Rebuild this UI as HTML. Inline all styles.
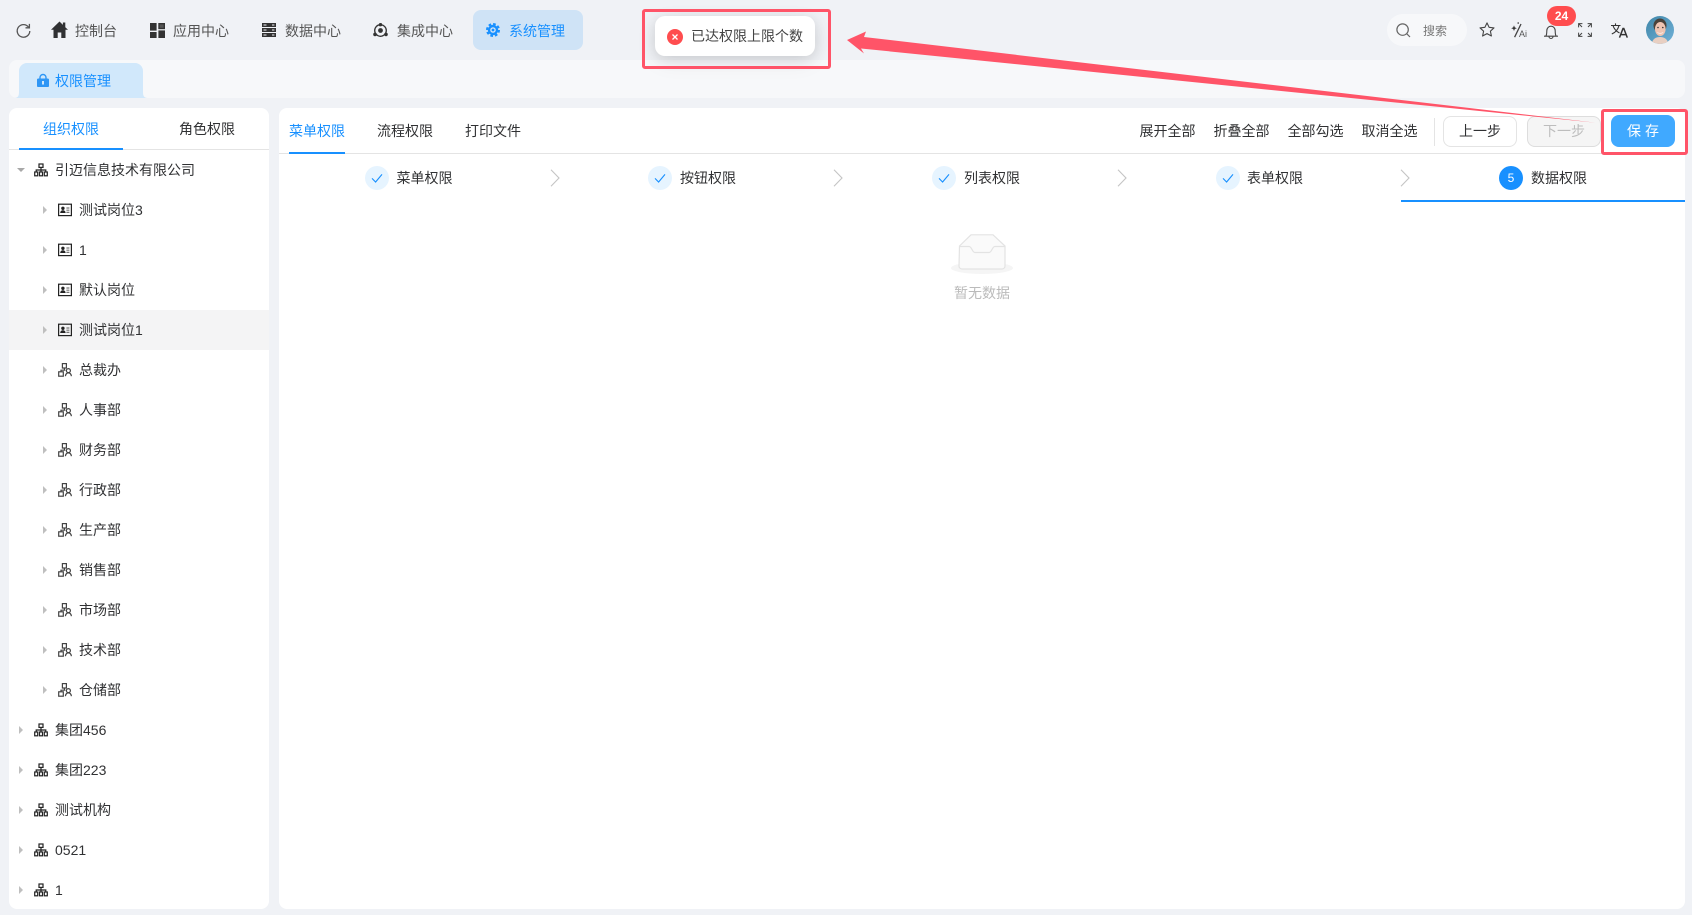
<!DOCTYPE html>
<html lang="zh-CN">
<head>
<meta charset="utf-8">
<title>权限管理</title>
<style>
html,body{margin:0;padding:0;width:1692px;height:915px;overflow:hidden;background:#f0f2f6;}
body{position:relative;font-family:"Liberation Sans","Noto Sans CJK SC",sans-serif;font-size:14px;color:#303133;}
.a{position:absolute;}
.t{position:absolute;white-space:nowrap;line-height:20px;height:20px;}
svg{position:absolute;display:block;overflow:visible;}
.nav{color:#555;}
.arr{position:absolute;width:0;height:0;border-left:4px solid #bfbfbf;border-top:4px solid transparent;border-bottom:4px solid transparent;}
.arrd{position:absolute;width:0;height:0;border-top:4px solid #a8a8a8;border-left:4px solid transparent;border-right:4px solid transparent;}
.chk{position:absolute;width:24px;height:24px;border-radius:50%;background:#e6f4ff;top:166px;}
.chev{position:absolute;top:169px;}
.btn{position:absolute;box-sizing:border-box;border-radius:8px;text-align:center;}
</style>
</head>
<body>
<svg width="0" height="0" style="position:absolute">
<defs>
<symbol id="org" viewBox="0 0 14 14">
<g fill="none" stroke="#222" stroke-width="1.2">
<rect x="5" y="1" width="4" height="3.4"/>
<path d="M7 4.4V7M2.2 9V7h9.6v2M7 7v2"/>
<rect x=".7" y="9" width="3" height="3.8"/>
<rect x="5.5" y="9" width="3" height="3.8"/>
<rect x="10.3" y="9" width="3" height="3.8"/>
</g>
</symbol>
<symbol id="post" viewBox="0 0 14 14">
<g fill="none" stroke="#222" stroke-width="1.2">
<rect x=".6" y="1.2" width="12.8" height="11.4"/>
<path d="M8.400 5h3M8.400 7.200h3M8.400 9.400h3" stroke="#777"/>
</g>
<circle cx="4.900" cy="5.300" r="1.700" fill="#222"/>
<path d="M2.200 10c.2-2 1.300-2.700 2.700-2.700s2.500.7 2.700 2.700z" fill="#222"/>
</symbol>
<symbol id="dept" viewBox="0 0 14 14">
<g fill="none" stroke="#444" stroke-width="1.2">
<rect x="4.400" y=".6" width="4" height="4.400"/>
<path d="M6.400 5v2.200M3 8.800V7.200h4.400"/>
<rect x=".7" y="8.800" width="4.600" height="4.400"/>
<circle cx="10.400" cy="7.600" r="2"/>
<path d="M7.400 13.200c.3-2.200 1.500-3.300 3-3.300s2.700 1.100 3 3.300"/>
</g>
</symbol>
<symbol id="chev" viewBox="0 0 10 18">
<path d="M1 .8 9 9 1 17.200" fill="none" stroke="#c4c4c4" stroke-width="1.100"/>
</symbol>
<symbol id="ok" viewBox="0 0 12 12">
<path d="M1 6.400 4.600 10 11 2.400" fill="none" stroke="#1890ff" stroke-width="1.100"/>
</symbol>
</defs>
</svg>

<!-- top nav -->
<svg style="left:16px;top:23px" width="15" height="15" viewBox="0 0 15 15"><path d="M12.600 4.200A6.300 6.300 0 1 0 13.800 8" fill="none" stroke="#555" stroke-width="1.300"/><path d="M13.400 .9v3.900H9.500" fill="none" stroke="#555" stroke-width="1.300"/></svg>

<svg style="left:51px;top:21px" width="17" height="17" viewBox="0 0 17 17"><path d="M8.500 .5 0 8.800h2.500V17h4.200v-5.500h3.600V17h4.200V8.800H17l-2.700-2.600V1.500h-2.400v2.400z" fill="#303133"/></svg>
<div class="t nav" style="left:75px;top:21px">控制台</div>

<svg style="left:150px;top:23px" width="15" height="15" viewBox="0 0 15 15"><g fill="#333"><rect width="6.600" height="7.600"/><rect y="9" width="6.600" height="6"/><rect x="8.400" y="7.400" width="6.600" height="7.600"/></g><rect x="9" y=".7" width="5.300" height="4.800" fill="#555" stroke="#333" stroke-width="1.400"/></svg>
<div class="t nav" style="left:173px;top:21px">应用中心</div>

<svg style="left:262px;top:23px" width="14" height="14" viewBox="0 0 14 14"><g fill="#333"><rect width="14" height="4"/><rect y="5" width="14" height="4"/><rect y="10" width="14" height="4"/></g><g fill="#f0f2f6"><rect x="1.500" y="1.500" width="3" height="1"/><rect x="1.500" y="6.500" width="3" height="1"/><rect x="1.500" y="11.500" width="3" height="1"/><rect x="10" y="1.500" width="2.400" height="1"/><rect x="10" y="6.500" width="2.400" height="1"/><rect x="10" y="11.500" width="2.400" height="1"/></g></svg>
<div class="t nav" style="left:285px;top:21px">数据中心</div>

<svg style="left:373px;top:23px" width="15" height="15" viewBox="0 0 15 15"><circle cx="7.500" cy="7.500" r="5.800" fill="none" stroke="#333" stroke-width="1.300"/><circle cx="7.500" cy="7.500" r="2.400" fill="#333"/><circle cx="7.500" cy="1.700" r="1.700" fill="#333"/><circle cx="2" cy="11.400" r="1.800" fill="#333"/><circle cx="13" cy="11.400" r="1.800" fill="#333"/></svg>
<div class="t nav" style="left:397px;top:21px">集成中心</div>

<div class="a" style="left:473px;top:10px;width:110px;height:40px;border-radius:8px;background:#cfe3f6"></div>
<svg style="left:486px;top:23px" width="14" height="14" viewBox="0 0 14 14"><circle cx="7" cy="7" r="5.200" fill="#1890ff"/><circle cx="7" cy="7" r="6" fill="none" stroke="#1890ff" stroke-width="2" stroke-dasharray="2.700 2"/><circle cx="7" cy="7" r="2.800" fill="#cfe3f6"/><circle cx="7" cy="7" r="1.400" fill="#1890ff"/></svg>
<div class="t" style="left:509px;top:21px;color:#1890ff">系统管理</div>

<!-- right tools -->
<div class="a" style="left:1387px;top:14px;width:80px;height:32px;border-radius:16px;background:#f7f8fa"></div>
<svg style="left:1396px;top:23px" width="15" height="15" viewBox="0 0 15 15"><circle cx="6.600" cy="6.600" r="5.700" fill="none" stroke="#666" stroke-width="1.200"/><path d="M10.800 10.800 14 14" stroke="#666" stroke-width="1.200"/></svg>
<div class="t" style="left:1423px;top:21px;font-size:12px;color:#777">搜索</div>
<svg style="left:1479px;top:22px" width="16" height="15" viewBox="0 0 16 15"><path d="M8 .9 10.100 5.300 15 5.900 11.400 9.200 12.400 14 8 11.600 3.600 14 4.600 9.200 1 5.900 5.900 5.300z" fill="none" stroke="#444" stroke-width="1.100" stroke-linejoin="round"/></svg>
<svg style="left:1511px;top:22px" width="18" height="16" viewBox="0 0 18 16"><path d="M10 2 3.600 15.200" stroke="#444" stroke-width="1.300"/><path d="M3 3.400 3.800 5.400 5.800 6.200 3.800 7 3 9 2.200 7 .2 6.200 2.200 5.400z" fill="#333"/><circle cx="7.200" cy="1" r=".8" fill="#333"/><text x="8" y="15" font-size="9" fill="#555" font-family="Liberation Sans">Ai</text></svg>
<svg style="left:1543px;top:24px" width="16" height="15" viewBox="0 0 16 15"><path d="M1 12.200h14M2.800 12.200c1-1.500 1-3.500 1-5.500a4.200 4.500 0 0 1 8.400 0c0 2 0 4 1 5.500M6 12.500a2 2 0 0 0 4 0" fill="none" stroke="#444" stroke-width="1.100"/></svg>
<div class="a" style="left:1547px;top:6px;width:29px;height:20px;border-radius:10px;background:#ff4d4f;color:#fff;text-align:center;line-height:20px;font-size:12px;font-weight:bold">24</div>
<svg style="left:1578px;top:23px" width="14" height="14" viewBox="0 0 14 14"><path d="M.6 4.400V.6h3.800M9.600.6h3.800v3.800M.6 9.600v3.800h3.800M13.400 9.600v3.800H9.600M1 1l3 3M13 1l-3 3M1 13l3-3M13 13l-3-3" fill="none" stroke="#444" stroke-width="1"/></svg>
<svg style="left:1611px;top:23px" width="17" height="15" viewBox="0 0 17 15"><path d="M0 2.500h9.500M4.500.4v2.100M8 2.500C7 6.500 4.500 9.500 .8 11M2 2.500c1 3.500 3.500 6 6.500 7.500" fill="none" stroke="#333" stroke-width="1.100"/><path d="M8.500 14.600 12 5.500h.8l3.500 9.100M9.800 11.600h5.200" fill="none" stroke="#333" stroke-width="1.500"/></svg>
<svg style="left:1646px;top:16px" width="28" height="28" viewBox="0 0 28 28">
<defs><clipPath id="av"><circle cx="14" cy="14" r="14"/></clipPath><linearGradient id="avb" x1="0" y1="0" x2="1" y2="1"><stop offset="0" stop-color="#3f86a8"/><stop offset="1" stop-color="#70b1d8"/></linearGradient></defs>
<g clip-path="url(#av)"><rect width="28" height="28" fill="url(#avb)"/><path d="M6 28c0-5 4-7 8-7s8 2 8 7z" fill="#e8cfc2"/><ellipse cx="14" cy="9.500" rx="6.500" ry="7" fill="#4a423a"/><ellipse cx="14.300" cy="13" rx="5.300" ry="7" fill="#eec4b2"/><path d="M11 16c1.800 1.300 4.500 1.300 6.400 0-.6 2.200-5.600 2.200-6.400 0z" fill="#fff"/><circle cx="12" cy="11.500" r=".8" fill="#333"/><circle cx="16.800" cy="11.500" r=".8" fill="#333"/></g></svg>

<!-- tab strip -->
<div class="a" style="left:9px;top:60px;width:1676px;height:38px;border-radius:8px;background:#f7f8fa"></div>
<svg style="left:14px;top:63px" width="134" height="35" viewBox="0 0 134 35"><path d="M0 35c4 0 5-2 5-6V8a8 8 0 0 1 8-8h108a8 8 0 0 1 8 8v21c0 4 1 6 5 6z" fill="#d1e8fb"/></svg>
<svg style="left:37px;top:74px" width="12" height="13" viewBox="0 0 12 13"><path d="M3 5V3.500a3 3 0 0 1 6 0V5" fill="none" stroke="#2e96f5" stroke-width="1.400"/><rect y="4.500" width="12" height="8.500" rx="1.300" fill="#2e96f5"/><rect x="5" y="7" width="2" height="3.500" fill="#d1e8fb"/></svg>
<div class="t" style="left:55px;top:71px;color:#1890ff">权限管理</div>

<!-- left panel -->
<div class="a" style="left:9px;top:108px;width:260px;height:801px;background:#fff;border-radius:8px"></div>
<div class="a" style="left:9px;top:149px;width:260px;height:1px;background:#e4e4e4"></div>
<div class="a" style="left:19px;top:148px;width:104px;height:2px;background:#1890ff"></div>
<div class="t" style="left:43px;top:119px;color:#1890ff">组织权限</div>
<div class="t" style="left:179px;top:119px">角色权限</div>

<div class="a" style="left:9px;top:310px;width:260px;height:40px;background:#f4f4f5"></div>

<div class="arrd" style="left:17px;top:168px"></div>
<svg style="left:34px;top:163px" width="14" height="14"><use href="#org"/></svg>
<div class="t" style="left:55px;top:160px">引迈信息技术有限公司</div>

<div class="arr" style="left:43px;top:206px"></div><svg style="left:58px;top:203px" width="14" height="14"><use href="#post"/></svg><div class="t" style="left:79px;top:200px">测试岗位3</div>
<div class="arr" style="left:43px;top:246px"></div><svg style="left:58px;top:243px" width="14" height="14"><use href="#post"/></svg><div class="t" style="left:79px;top:240px">1</div>
<div class="arr" style="left:43px;top:286px"></div><svg style="left:58px;top:283px" width="14" height="14"><use href="#post"/></svg><div class="t" style="left:79px;top:280px">默认岗位</div>
<div class="arr" style="left:43px;top:326px"></div><svg style="left:58px;top:323px" width="14" height="14"><use href="#post"/></svg><div class="t" style="left:79px;top:320px">测试岗位1</div>
<div class="arr" style="left:43px;top:366px"></div><svg style="left:58px;top:363px" width="14" height="14"><use href="#dept"/></svg><div class="t" style="left:79px;top:360px">总裁办</div>
<div class="arr" style="left:43px;top:406px"></div><svg style="left:58px;top:403px" width="14" height="14"><use href="#dept"/></svg><div class="t" style="left:79px;top:400px">人事部</div>
<div class="arr" style="left:43px;top:446px"></div><svg style="left:58px;top:443px" width="14" height="14"><use href="#dept"/></svg><div class="t" style="left:79px;top:440px">财务部</div>
<div class="arr" style="left:43px;top:486px"></div><svg style="left:58px;top:483px" width="14" height="14"><use href="#dept"/></svg><div class="t" style="left:79px;top:480px">行政部</div>
<div class="arr" style="left:43px;top:526px"></div><svg style="left:58px;top:523px" width="14" height="14"><use href="#dept"/></svg><div class="t" style="left:79px;top:520px">生产部</div>
<div class="arr" style="left:43px;top:566px"></div><svg style="left:58px;top:563px" width="14" height="14"><use href="#dept"/></svg><div class="t" style="left:79px;top:560px">销售部</div>
<div class="arr" style="left:43px;top:606px"></div><svg style="left:58px;top:603px" width="14" height="14"><use href="#dept"/></svg><div class="t" style="left:79px;top:600px">市场部</div>
<div class="arr" style="left:43px;top:646px"></div><svg style="left:58px;top:643px" width="14" height="14"><use href="#dept"/></svg><div class="t" style="left:79px;top:640px">技术部</div>
<div class="arr" style="left:43px;top:686px"></div><svg style="left:58px;top:683px" width="14" height="14"><use href="#dept"/></svg><div class="t" style="left:79px;top:680px">仓储部</div>

<div class="arr" style="left:19px;top:726px"></div><svg style="left:34px;top:723px" width="14" height="14"><use href="#org"/></svg><div class="t" style="left:55px;top:720px">集团456</div>
<div class="arr" style="left:19px;top:766px"></div><svg style="left:34px;top:763px" width="14" height="14"><use href="#org"/></svg><div class="t" style="left:55px;top:760px">集团223</div>
<div class="arr" style="left:19px;top:806px"></div><svg style="left:34px;top:803px" width="14" height="14"><use href="#org"/></svg><div class="t" style="left:55px;top:800px">测试机构</div>
<div class="arr" style="left:19px;top:846px"></div><svg style="left:34px;top:843px" width="14" height="14"><use href="#org"/></svg><div class="t" style="left:55px;top:840px">0521</div>
<div class="arr" style="left:19px;top:886px"></div><svg style="left:34px;top:883px" width="14" height="14"><use href="#org"/></svg><div class="t" style="left:55px;top:880px">1</div>

<!-- right panel -->
<div class="a" style="left:279px;top:108px;width:1406px;height:801px;background:#fff;border-radius:8px"></div>
<div class="a" style="left:279px;top:153px;width:1406px;height:1px;background:#e4e4e4"></div>
<div class="a" style="left:289px;top:152px;width:56px;height:2px;background:#1890ff"></div>
<div class="t" style="left:289px;top:121px;color:#1890ff">菜单权限</div>
<div class="t" style="left:377px;top:121px">流程权限</div>
<div class="t" style="left:465px;top:121px">打印文件</div>

<div class="t" style="left:1139.500px;top:121px">展开全部</div>
<div class="t" style="left:1213.500px;top:121px">折叠全部</div>
<div class="t" style="left:1287.500px;top:121px">全部勾选</div>
<div class="t" style="left:1361.500px;top:121px">取消全选</div>
<div class="a" style="left:1434px;top:118px;width:1px;height:28px;background:#e4e4e4"></div>
<div class="btn" style="left:1443px;top:116px;width:74px;height:31px;border:1px solid #e4e4e4;line-height:29px">上一步</div>
<div class="btn" style="left:1527px;top:116px;width:74px;height:31px;border:1px solid #ddd;background:#f5f5f5;color:#bdbdbd;line-height:29px">下一步</div>
<div class="btn" style="left:1611px;top:115px;width:64px;height:32px;background:#40a9ff;color:#fff;line-height:32px;letter-spacing:4px;text-indent:4px">保存</div>

<!-- steps -->
<div class="chk" style="left:365px"></div><svg style="left:371px;top:172px" width="12" height="12"><use href="#ok"/></svg>
<div class="t" style="left:396.500px;top:168px">菜单权限</div>
<svg class="chev" style="left:550px" width="10" height="18"><use href="#chev"/></svg>

<div class="chk" style="left:648px"></div><svg style="left:654px;top:172px" width="12" height="12"><use href="#ok"/></svg>
<div class="t" style="left:680px;top:168px">按钮权限</div>
<svg class="chev" style="left:833px" width="10" height="18"><use href="#chev"/></svg>

<div class="chk" style="left:932px"></div><svg style="left:938px;top:172px" width="12" height="12"><use href="#ok"/></svg>
<div class="t" style="left:964px;top:168px">列表权限</div>
<svg class="chev" style="left:1117px" width="10" height="18"><use href="#chev"/></svg>

<div class="chk" style="left:1216px"></div><svg style="left:1222px;top:172px" width="12" height="12"><use href="#ok"/></svg>
<div class="t" style="left:1247px;top:168px">表单权限</div>
<svg class="chev" style="left:1400px" width="10" height="18"><use href="#chev"/></svg>

<div class="chk" style="left:1499px;background:#1890ff;color:#fff;text-align:center;line-height:24px;font-size:12px">5</div>
<div class="t" style="left:1531px;top:168px">数据权限</div>
<div class="a" style="left:1401px;top:200px;width:284px;height:2px;background:#1890ff"></div>

<!-- empty -->
<svg style="left:951px;top:234px" width="62" height="40" viewBox="0 0 62 40">
<ellipse cx="31" cy="34" rx="31" ry="6" fill="#f5f5f5"/>
<path d="M8.500 12 20 .8h22L54 12v20a3 3 0 0 1-3 3H11a3 3 0 0 1-3-3z" fill="#fafafa" stroke="#e3e3e3" stroke-width="1.200"/>
<path d="M8 12.500h10c3 0 3 6 6 6h14c3 0 3-6 6-6h10" fill="none" stroke="#e3e3e3" stroke-width="1.200"/>
</svg>
<div class="t" style="left:954px;top:283px;color:#bbb">暂无数据</div>

<!-- toast -->
<div class="a" style="left:655px;top:16px;width:160px;height:40px;background:#fff;border-radius:10px;box-shadow:0 3px 14px rgba(0,0,0,.12),0 6px 24px rgba(0,0,0,.06)"></div>
<svg style="left:667px;top:29px" width="16" height="16" viewBox="0 0 16 16"><circle cx="8" cy="8" r="8" fill="#ff4d4f"/><path d="M5.500 5.500l5 5M10.500 5.500l-5 5" stroke="#fff" stroke-width="1.300"/></svg>
<div class="t" style="left:691px;top:26px;color:#444">已达权限上限个数</div>

<!-- annotations -->
<div class="a" style="left:642px;top:9px;width:189px;height:60px;box-sizing:border-box;border:3px solid #ff5468;border-radius:3px"></div>
<div class="a" style="left:1601px;top:109px;width:87px;height:46px;box-sizing:border-box;border:3px solid #ff5468;border-radius:3px"></div>
<svg style="left:0;top:0" width="1692" height="915"><polygon points="847,40 866,31.500 864,37 1596,122.800 861,48.500 864,53.500" fill="#ff5468"/></svg>
</body>
</html>
